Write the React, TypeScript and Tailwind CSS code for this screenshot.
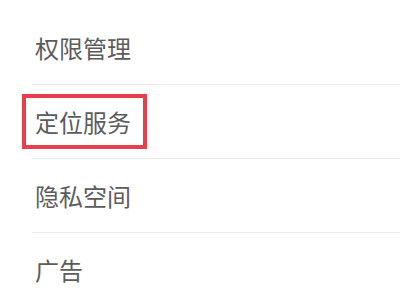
const items = ['权限管理', '定位服务', '隐私空间', '广告'];

export default function App() {
  return (
    <div
      className="w-[400px] h-[300px] overflow-hidden bg-white"
      style={{ fontFamily: '"Noto Sans CJK SC", "Noto Sans", sans-serif' }}
    >
      <div className="pt-[11px]">
        {items.map((label, i) => (
          <div key={label} className="relative">
            <div className="h-[73px] flex items-center pl-[35px]">
              <span className="text-[24px] leading-none text-[#5c5c5c]">{label}</span>
            </div>
            {i === 1 && (
              <div className="absolute left-[22px] top-[9px] w-[125px] h-[55px] border-[4px] border-[#e8404a]" />
            )}
            {i < items.length - 1 && <div className="ml-[32px] h-px bg-[#ececec]" />}
          </div>
        ))}
      </div>
    </div>
  );
}
